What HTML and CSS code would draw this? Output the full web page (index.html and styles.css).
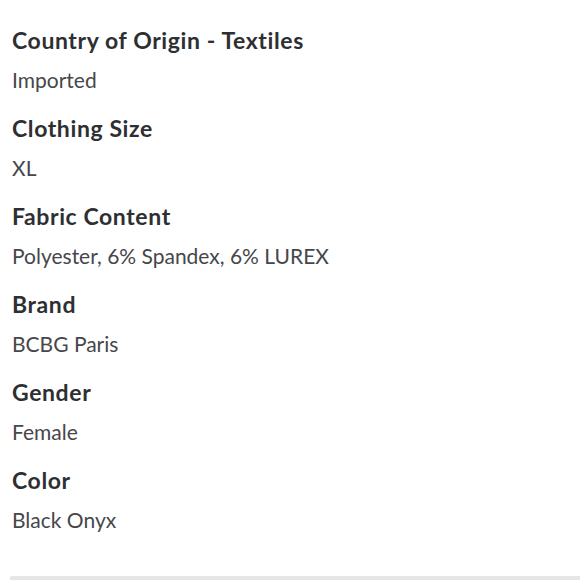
FILE: index.html
```html
<!DOCTYPE html>
<html>
<head>
<meta charset="utf-8">
<link rel="stylesheet" href="styles.css">
</head>
<body>
<div class="specs">
  <div class="item"><h3 class="label">Country of Origin - Textiles</h3><p class="value">Imported</p></div>
  <div class="item"><h3 class="label">Clothing Size</h3><p class="value">XL</p></div>
  <div class="item"><h3 class="label">Fabric Content</h3><p class="value">Polyester, 6% Spandex, 6% LUREX</p></div>
  <div class="item"><h3 class="label">Brand</h3><p class="value">BCBG Paris</p></div>
  <div class="item"><h3 class="label">Gender</h3><p class="value">Female</p></div>
  <div class="item"><h3 class="label">Color</h3><p class="value">Black Onyx</p></div>
</div>
<div class="divider"></div>
</body>
</html>
```
FILE: styles.css
```css
html, body { margin: 0; padding: 0; background: #fff; }
body { width: 580px; height: 580px; overflow: hidden; position: relative; font-family: Lato, "Open Sans", sans-serif; }
.specs { padding: 25px 12px 0; display: flex; flex-direction: column; }
.item { height: 88px; }
.label { margin: 0; font-size: 23px; line-height: 30px; font-weight: 700; color: #2e2f32; letter-spacing: 0.6px; }
.value { margin: 12px 0 0; font-size: 21px; line-height: 26px; font-weight: 400; color: #46474a; }
.divider { position: absolute; left: 10px; right: 0; bottom: 0; height: 4px; background: #e6e6e6; border-radius: 2px 0 0 0; }
```
